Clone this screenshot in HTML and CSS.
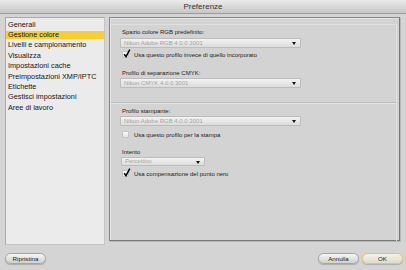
FILE: index.html
```html
<!DOCTYPE html>
<html lang="it">
<head>
<meta charset="utf-8">
<title>Preferenze</title>
<link rel="stylesheet" href="styles.css">
</head>
<body>
<div class="window">
  <div class="titlebar">Preferenze</div>
  <div class="main">
    <ul class="sidebar">
      <li>Generali</li>
      <li class="active">Gestione colore</li>
      <li>Livelli e campionamento</li>
      <li>Visualizza</li>
      <li>Impostazioni cache</li>
      <li>Preimpostazioni XMP/IPTC</li>
      <li>Etichette</li>
      <li>Gestisci impostazioni</li>
      <li>Aree di lavoro</li>
    </ul>
    <div class="panel">
      <div class="group group-top">
        <div class="label">Spazio colore RGB predefinito:</div>
        <div class="select wide"><span>Nikon Adobe RGB 4.0.0.3001</span><i class="arrow"></i></div>
        <div class="check-row">
          <span class="box checked"><svg viewBox="0 0 8 9" width="8" height="9"><path d="M1.2 5.2 L3 7.6 L6.8 0.6" fill="none" stroke="#000" stroke-width="1.5"/></svg></span>
          <span>Usa questo profilo invece di quello incorporato</span>
        </div>
        <div class="label l2">Profilo di separazione CMYK:</div>
        <div class="select wide"><span>Nikon CMYK 4.0.0.3001</span><i class="arrow"></i></div>
      </div>
      <div class="group group-bottom">
        <div class="label">Profilo stampante:</div>
        <div class="select wide"><span>Nikon Adobe RGB 4.0.0.3001</span><i class="arrow"></i></div>
        <div class="check-row cr2">
          <span class="box"></span>
          <span>Usa questo profilo per la stampa</span>
        </div>
        <div class="label l3">Intento</div>
        <div class="select narrow"><span>Percettivo</span><i class="arrow"></i></div>
        <div class="check-row cr3">
          <span class="box checked"><svg viewBox="0 0 8 9" width="8" height="9"><path d="M1.2 5.2 L3 7.6 L6.8 0.6" fill="none" stroke="#000" stroke-width="1.5"/></svg></span>
          <span>Usa compensazione del punto nero</span>
        </div>
      </div>
    </div>
  </div>
  <div class="footer">
    <button class="btn">Ripristina</button>
    <div class="spacer"></div>
    <button class="btn">Annulla</button>
    <button class="btn default">OK</button>
  </div>
</div>
</body>
</html>
```

FILE: styles.css
```css
* { box-sizing: border-box; }
html, body { margin: 0; padding: 0; }
body {
  width: 406px;
  height: 270px;
  overflow: hidden;
  background: #d4d4d4;
  font-family: "Liberation Sans", Arial, sans-serif;
  color: #222;
}
.window { width: 406px; height: 270px; display: flex; flex-direction: column; }
.titlebar {
  height: 14px;
  line-height: 13px;
  text-align: center;
  font-size: 8px;
  color: #333;
  background: linear-gradient(#ebebeb, #c6c6c6);
  border-bottom: 1px solid #9a9a9a;
}
.main {
  display: flex;
  padding: 3px 0 0 5px;
  height: 231px;
}
.sidebar {
  list-style: none;
  margin: 0;
  padding: 2.6px 0 0 0;
  width: 100px;
  height: 228px;
  background: #ebebeb;
  border: 1px solid #a9a9a9;
  border-right-color: #c4c4c4;
  border-bottom-color: #c4c4c4;
  display: flex;
  flex-direction: column;
  gap: 2px;
}
.sidebar li {
  height: 8.4px;
  line-height: 8.4px;
  font-size: 7.3px;
  padding-left: 2px;
  color: #151515;
  white-space: nowrap;
}
.sidebar li.active { background: #f7cf35; }
.panel {
  margin-left: 4px;
  width: 291px;
  height: 224px;
  border: 1px solid #8a8a8a;
  border-right-color: #777;
  border-bottom-color: #777;
  box-shadow: inset 1px 1px 0 #e2e2e2, 1px 1px 0 #b8b8b8;
  background: #d3d3d3;
  padding: 6px 2px 0 1px;
  font-size: 6px;
  color: #222;
}
.group { padding-left: 11px; display: flex; flex-direction: column; }
.group-top {
  height: 78px;
  border-top: 1px solid #e0e0e0;
  border-right: 1px solid #e0e0e0;
  padding-top: 3px;
}
.group-bottom {
  border-top: 1px solid #bdbdbd;
  box-shadow: inset 0 1px 0 #e4e4e4;
  padding-top: 4px;
  height: 139px;
  border-right: 1px solid #e0e0e0;
}
.label { height: 8px; line-height: 8px; white-space: nowrap; }
.label.l2 { margin-top: 11px; }
.label.l3 { margin-top: 10px; }
.select {
  position: relative;
  height: 10px;
  margin-top: 2px;
  border: 1px solid #bcbcbc;
  border-radius: 1px;
  background: linear-gradient(#f3f3f3, #dcdcdc);
  color: #a3a3a3;
  line-height: 8px;
  padding-left: 3px;
  white-space: nowrap;
}
.group-top .label.l2 + .select { margin-top: 1px; }
.group-bottom > .label:first-child + .select { margin-top: 1px; }
.select.wide { width: 181px; margin-left: -2px; }
.select.narrow { width: 84px; height: 9px; margin-left: -1px; margin-top: 1px; line-height: 7px; }
.arrow {
  position: absolute;
  right: 4px;
  top: 3px;
  width: 0;
  height: 0;
  border-left: 2px solid transparent;
  border-right: 2px solid transparent;
  border-top: 3px solid #111;
}
.check-row {
  display: flex;
  align-items: center;
  gap: 5px;
  height: 7px;
  margin-top: 3px;
  white-space: nowrap;
}
.check-row.cr2 { margin-top: 5px; }
.check-row.cr3 { margin-top: 4px; }
.box {
  position: relative;
  width: 7px;
  height: 7px;
  flex: none;
  background: linear-gradient(#fafafa, #e2e2e2);
  border: 1px solid #c4c4c4;
  border-radius: 1px;
}
.box svg { position: absolute; left: 0; top: -3px; }
.footer {
  display: flex;
  align-items: center;
  padding: 0 3px 0 5px;
  margin-top: 8px;
  gap: 3px;
}
.spacer { flex: 1; }
.btn {
  width: 41px;
  height: 11px;
  padding: 0;
  border: 1px solid #a5a5a5;
  border-radius: 6px;
  background: linear-gradient(#f7f7f7, #cfcfcf);
  font-family: "Liberation Sans", Arial, sans-serif;
  font-size: 6.2px;
  line-height: 9px;
  color: #222;
  box-shadow: 0 1px 1px rgba(0,0,0,0.18);
}
.btn.default {
  border-color: #e7c26a;
  background: linear-gradient(#f4f1e6, #e0dccd);
}
```
